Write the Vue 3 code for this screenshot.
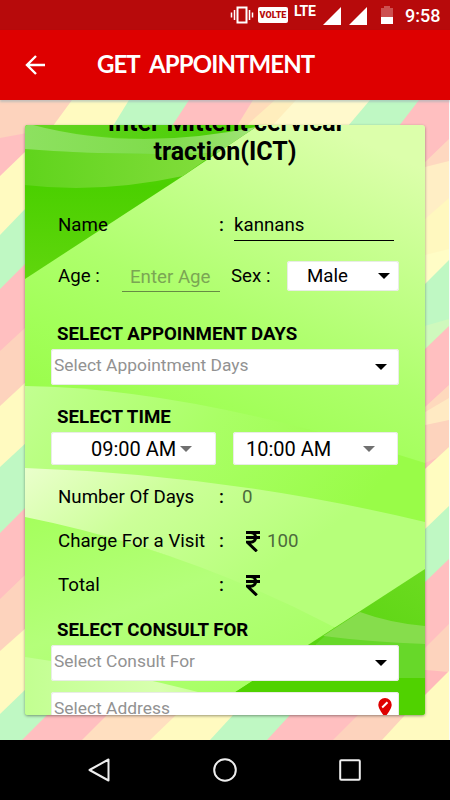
<script setup>
const orange = '#fdd3bd'
const pink = '#ffbfc0'
const yellow = '#fffac0'
const green = '#bff8c3'
const cream = '#ffeac3'

// Each band starts at [left y, right y] and is painted over the one above it.
const leftBands = [
  [100, 100, orange], [138, 135, pink], [176, 152, yellow], [235, 209, green],
  [289, 264, pink], [351, 328, orange], [406, 383, yellow], [467, 444, green],
  [533, 508, pink], [599, 575, orange], [651, 629, yellow], [714, 690, green]
]
const rightBands = [
  [100, 100, pink], [162, 139, '#fed8c0'], [167, 161, '#ffeec5'], [219, 198, '#fff8bf'], [255, 249, '#fffdc6'],
  [284, 260, green], [326, 319, '#cff9bd'], [349, 326, pink], [407, 385, '#fed9bd'], [412, 398, cream],
  [425, 420, '#fdd3bd'], [463, 452, '#ffc3bd'], [469, 447, '#fffcc0'], [529, 506, green], [582, 559, pink],
  [648, 624, orange], [670, 672, '#ffb9bb'], [695, 671, yellow]
]
// Each band starts at [top x, bottom x].
const topBands = [
  [0, 0, orange], [72, 53, yellow], [129, 113, green], [189, 172, pink], [253, 237, '#ffdcba'],
  [275, 246, '#ffeebd'], [296, 272, '#fff9cc'], [370, 348, green], [419, 399, pink]
]
const bottomBands = [
  [0, 0, green], [47, 22, pink], [107, 82, '#ffdfc0'], [176, 150, yellow], [233, 210, green],
  [290, 267, pink], [358, 333, orange], [405, 382, yellow]
]
const amounts = [
  { label: 'Number Of Days', value: '0' },
  { label: 'Charge For a Visit', value: '100', rupee: true },
  { label: 'Total', value: '', rupee: true }
]
</script>

<template>
  <div class="screen">
    <header class="status">
      <svg class="vibrate" viewBox="0 0 24 20"><path d="M7.500 2.500h9v15h-9z" fill="none" stroke="#fff" stroke-width="2" /><path d="M4.500 5v10M1.500 7.500v5M19.500 5v10M22.500 7.500v5" stroke="#fff" stroke-width="1.500" /></svg>
      <span class="volte">VOLTE</span>
      <span class="lte">LTE</span>
      <svg class="signal" viewBox="0 0 18 18"><path d="M0 18L18 0V18z" fill="#fff" /></svg>
      <svg class="signal second" viewBox="0 0 18 18"><path d="M0 18L18 0V18z" fill="#fff" /></svg>
      <svg class="battery" viewBox="0 0 12 18"><path d="M0 2h3V0h6v2h3v9H0z" fill="#cd5050" /><path d="M0 11h12v7H0z" fill="#fff" /></svg>
      <span class="clock">9:58</span>
    </header>
    <div class="toolbar">
      <svg class="back" viewBox="0 0 20 20"><path d="M20 10H2M11 1L2 10l9 9" fill="none" stroke="#fff" stroke-width="2.400" /></svg>
      <h1><span class="w1">GET</span><span class="w2">APPOINTMENT</span></h1>
    </div>

    <main>
      <svg class="stripes" viewBox="0 100 450 640" preserveAspectRatio="none">
        <polygon v-for="(b, i) in leftBands" :key="'l' + i" :points="`0,${b[0]} 27,${b[1] - 2} 27,740 0,740`" :fill="b[2]" />
        <polygon v-for="(b, i) in rightBands" :key="'r' + i" :points="`423,${b[0] + (b[0] - b[1]) / 12} 449,${b[1]} 449,740 423,740`" :fill="b[2]" />
        <polygon v-for="(b, i) in topBands" :key="'t' + i" :points="`${b[0]},100 ${b[1]},126 449,126 449,100`" :fill="b[2]" />
        <polygon v-for="(b, i) in bottomBands" :key="'b' + i" :points="`${b[0]},715 ${b[1]},740 449,740 449,715`" :fill="b[2]" />
        <path d="M449 100h1v640h-1z" fill="#f8fafa" />
      </svg>

      <section class="card">
        <svg class="waves" viewBox="25 125 400 590" preserveAspectRatio="none">
          <defs>
            <linearGradient id="base" x1=".75" y1="0" x2=".45" y2="1">
              <stop offset="0" stop-color="#dcffab" /><stop offset=".18" stop-color="#c4ff8c" /><stop offset=".36" stop-color="#aeff6c" /><stop offset=".5" stop-color="#a2ff59" /><stop offset=".65" stop-color="#98fc48" /><stop offset="1" stop-color="#a8ff66" />
            </linearGradient>
            <linearGradient id="pale" x1="0" y1="0" x2=".75" y2=".4"><stop offset="0" stop-color="#eaffcc" /><stop offset=".45" stop-color="#ccff99" /><stop offset="1" stop-color="#b6ff7a" /></linearGradient>
            <linearGradient id="mist" x1="0" y1="0" x2="1" y2=".3"><stop offset="0" stop-color="#c2ff91" /><stop offset=".5" stop-color="#aaff66" /><stop offset="1" stop-color="#99fc48" /></linearGradient>
            <linearGradient id="lower" x1="0" y1="0" x2=".6" y2="1"><stop offset="0" stop-color="#a4ff5b" /><stop offset=".5" stop-color="#b4ff7a" /><stop offset="1" stop-color="#a6ff62" /></linearGradient>
            <linearGradient id="foot"><stop offset="0" stop-color="#c2ff91" /><stop offset=".6" stop-color="#d8ffaf" /><stop offset="1" stop-color="#b9ff80" /></linearGradient>
            <linearGradient id="deep" x1="0" y1="0" x2="0" y2="1"><stop offset="0" stop-color="#65d820" /><stop offset=".4" stop-color="#4bd000" /><stop offset="1" stop-color="#60d60d" /></linearGradient>
            <linearGradient id="crest"><stop offset="0" stop-color="#66d523" /><stop offset="1" stop-color="#45cd00" /></linearGradient>
            <linearGradient id="veil"><stop offset="0" stop-color="#8de160" /><stop offset=".6" stop-color="#7fdc4b" /><stop offset="1" stop-color="#a0e478" /></linearGradient>
            <linearGradient id="veil2"><stop offset="0" stop-color="#60d41c" /><stop offset="1" stop-color="#83dd3d" /></linearGradient>
            <linearGradient id="corner" x1="0" y1="1" x2="1" y2="0"><stop offset="0" stop-color="#45cd00" /><stop offset="1" stop-color="#6cdb20" /></linearGradient>
          </defs>
          <path d="M25 125h400v590H25z" fill="url(#base)" />
          <path d="M25 386Q190 388 425 463V530L25 480z" fill="url(#mist)" />
          <path d="M25 510L340 610L300 715H25z" fill="url(#lower)" />
          <path d="M25 468Q230 475 425 522V600L336 628Q185 549 25 517z" fill="url(#pale)" />
          <path d="M25 657Q130 672 250 706V715H25z" fill="url(#foot)" />
          <path d="M25 125H259L183 176L25 279z" fill="url(#deep)" />
          <path d="M25 125H259L248 132Q135 148 33 126H25z" fill="url(#crest)" />
          <path d="M25 149Q110 156 215 153L183 176Q100 194 25 185z" fill="url(#veil2)" />
          <path d="M25 125H33Q135 152 256 127L217 153Q110 156 25 149z" fill="url(#veil)" />
          <path d="M425 569L200 715H425z" fill="url(#corner)" />
          <path d="M325 636L316 644V678H425V643z" fill="#67d829" />
          <path d="M360 612Q390 623 425 626V644Q370 642 323 636z" fill="#86dd4c" />
          <path d="M257 678H425V715H200z" fill="#50d200" />
        </svg>

        <div class="form">
          <h2>Inter Mittent cervical<br />traction(ICT)</h2>

          <div class="row name">
            <span class="label">Name</span><span class="colon">:</span><span class="entry">kannans</span>
          </div>

          <div class="row age">
            <span class="age-label">Age :</span><span class="age-entry">Enter Age</span><span class="sex-label">Sex :</span>
            <div class="box sex"><span>Male</span><svg viewBox="0 0 12 6"><path d="M0 0h12L6 6z" /></svg></div>
          </div>

          <h3>SELECT APPOINMENT DAYS</h3>
          <div class="box wide"><span>Select Appointment Days</span><svg viewBox="0 0 12 6"><path d="M0 0h12L6 6z" /></svg></div>

          <h3 class="time-head">SELECT TIME</h3>
          <div class="times">
            <div class="box time from"><span>09:00 AM</span><svg viewBox="0 0 12 6"><path d="M0 0h12L6 6z" /></svg></div>
            <div class="box time to"><span>10:00 AM</span><svg viewBox="0 0 12 6"><path d="M0 0h12L6 6z" /></svg></div>
          </div>

          <div class="amounts">
            <div v-for="a in amounts" :key="a.label" class="row amount">
              <span class="label">{{ a.label }}</span><span class="colon">:</span>
              <svg v-if="a.rupee" class="rupee" viewBox="0 0 14 21"><path d="M0 1.500H14M0 6.500H14M1 1.500H4.500C11.300 1.500 11.300 11.300 4.500 11.300H1.500L10.800 20.300" fill="none" stroke="#000" stroke-width="3" /></svg>
              <span class="value">{{ a.value }}</span>
            </div>
          </div>

          <h3 class="consult-head">SELECT CONSULT FOR</h3>
          <div class="box wide consult"><span>Select Consult For</span><svg viewBox="0 0 12 6"><path d="M0 0h12L6 6z" /></svg></div>
          <div class="box wide address">
            <span>Select Address</span>
            <svg class="pin" viewBox="0 0 14 19"><path d="M7 0a6.700 6.700 0 0 0-6.700 6.800C.3 11.500 7 19 7 19s6.700-7.500 6.700-12.200A6.700 6.700 0 0 0 7 0z" fill="#de0000" /><path d="M4.200 9.500L9.500 4.300" stroke="#fff" stroke-width="2" /></svg>
          </div>
        </div>
      </section>
    </main>

    <nav>
      <svg viewBox="0 0 24 24"><path d="M20.500 1.500v21L1.500 12z" fill="none" stroke="#eee" stroke-width="2" stroke-linejoin="round" /></svg>
      <svg viewBox="0 0 24 24"><circle cx="12" cy="12" r="10.800" fill="none" stroke="#eee" stroke-width="2" /></svg>
      <svg viewBox="0 0 24 24"><rect x="2.200" y="2.200" width="19.600" height="19.600" rx="1" fill="none" stroke="#eee" stroke-width="2" /></svg>
    </nav>
  </div>
</template>

<style>
body { margin: 0; }
</style>

<style scoped>
.screen { width: 450px; height: 800px; display: flex; flex-direction: column; overflow: hidden; font-family: Roboto, "Liberation Sans", sans-serif; color: #000; }
svg { display: block; flex: none; }
span { white-space: nowrap; }
.status { height: 30px; flex: none; display: flex; align-items: flex-start; background: #b70a0b; color: #fff; }
.vibrate { width: 24px; height: 20px; margin: 5px 0 0 230px; }
.volte { width: 30px; height: 16px; margin: 7px 0 0 4px; border-radius: 2px; background: #fff; color: #b70a0b; font-size: 9px; font-weight: 900; line-height: 16px; text-align: center; }
.lte { width: 23px; margin: 3px 0 0 6px; font-size: 14px; line-height: 17px; font-weight: 700; letter-spacing: -.4px; }
.signal { width: 18px; height: 18px; margin: 7px 0 0 6px; }
.signal.second { margin-left: 8px; }
.battery { width: 12px; height: 18px; margin: 6px 0 0 14px; }
.clock { margin: 4px 0 0 12px; font-size: 18px; line-height: 23px; font-weight: 500; }
.toolbar { height: 70px; flex: none; display: flex; align-items: center; background: #de0000; color: #fff; z-index: 1; box-shadow: 0 2px 2px rgba(150, 175, 180, .55); }
.back { width: 20px; height: 20px; margin-left: 25px; }
h1 { display: flex; gap: 9px; margin: -2px 0 0 52px; font: 700 24px/30px Lato, sans-serif; }
.w1 { width: 43px; letter-spacing: -1px; }
.w2 { letter-spacing: -.9px; }
main { height: 640px; flex: none; display: grid; }
.stripes { grid-area: 1 / 1; width: 450px; height: 640px; }
.card { grid-area: 1 / 1; width: 400px; height: 590px; margin: 25px; border-radius: 3px; overflow: hidden; display: grid; grid-template: 590px / 400px; box-shadow: 0 1px 3px rgba(0, 0, 0, .4); z-index: 0; }
.waves { grid-area: 1 / 1; width: 400px; height: 590px; }
.form { grid-area: 1 / 1; z-index: 1; padding: 0 26px; margin-top: -17px; display: flex; flex-direction: column; }
h2 { margin: 0; height: 58px; font-size: 25px; line-height: 29px; font-weight: 700; text-align: center; }
.row { display: flex; align-items: center; padding-left: 7px; font-size: 18.700px; flex: none; }
.name { height: 40px; margin-top: 39px; }
.label { width: 161px; }
.colon { width: 15px; font-weight: 500; }
.entry { width: 160px; height: 32px; line-height: 32px; border-bottom: 1px solid #000; box-sizing: border-box; margin-bottom: 3px; margin-top: 3px; }
.age { height: 38px; margin-top: 12px; }
.age-label { width: 64px; }
.age-entry { width: 98px; height: 31px; line-height: 32px; box-sizing: border-box; border-bottom: 1px solid #668b44; padding-left: 8px; color: #7ba654; }
.sex-label { margin-left: 11px; width: 56px; }
.box { background: #fff; border-radius: 3px; box-shadow: inset 0 0 0 1px #e8ece6; display: flex; align-items: center; box-sizing: border-box; flex: none; }
.box svg { width: 12px; height: 6px; }
.sex { width: 112px; height: 30px; padding: 0 9px 0 20px; justify-content: space-between; }
h3 { margin: 27px 0 0 6px; height: 24px; line-height: 24px; font-size: 18.700px; font-weight: 700; white-space: nowrap; }
.wide { width: 348px; height: 36px; margin-top: 3px; padding: 0 12px 0 3px; justify-content: space-between; font-size: 17.400px; color: #929292; }
.wide span { margin-top: -4px; }
.wide svg { fill: #000; }
.time-head { margin-top: 20px; }
.times { display: flex; gap: 17px; margin-top: 3px; }
.time { width: 165px; height: 33px; font-size: 20px; }
.time span { margin-top: 1px; }
.time svg { fill: #707070; }
.from { padding-left: 40px; gap: 4px; }
.to { padding: 0 23px 0 13px; justify-content: space-between; }
.amounts { margin-top: 10px; }
.amount { height: 44px; }
.amount .colon { width: 23px; }
.rupee { width: 14px; height: 21px; margin: 0 7px 0 4px; }
.value { color: #4d6a3c; }
.consult-head { margin-top: 11px; }
.consult { margin-top: 3px; }
.address { margin-top: 11px; padding-right: 7px; }
.wide .pin { width: 14px; height: 19px; margin-top: -6px; }
nav { height: 60px; flex: none; background: #000; display: flex; align-items: center; justify-content: space-between; padding: 0 88px; }
nav svg { width: 24px; height: 24px; }
</style>
